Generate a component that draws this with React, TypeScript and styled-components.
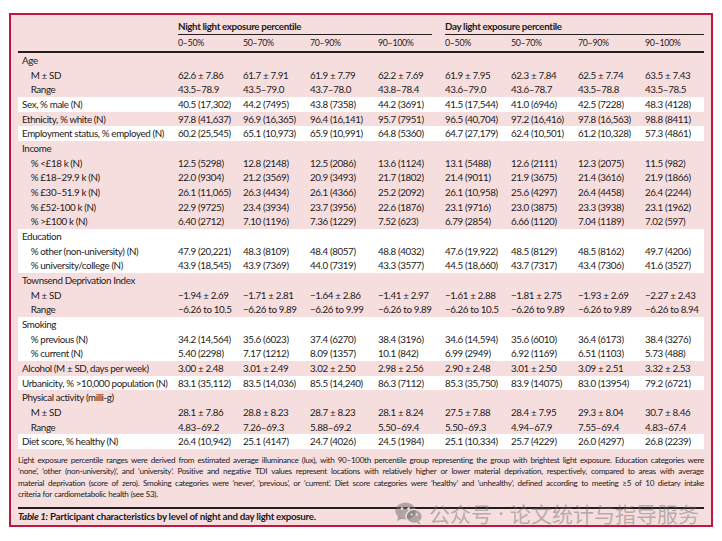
import React from 'react';
import styled, { createGlobalStyle } from 'styled-components';

const GlobalStyle = createGlobalStyle`
  html, body { margin: 0; padding: 0; background: #ffffff; }
  body { font-family: Lato, "Noto Sans", sans-serif; color: #231f20; }
`;

const COLS = '160px 65px 67px 68px 67px 66px 67px 67px 59px';

const Frame = styled.div`
  position: relative;
  box-sizing: border-box;
  margin: 13px 0 0 9px;
  width: 704px;
  height: 514px;
  border: 2px solid #c0163f;
  background: #f6dede;
  padding: 0 7px;
  font-family: Lato, "Noto Sans", sans-serif;
  color: #1e1a1b;
`;

const GroupHeadRow = styled.div`
  display: grid;
  grid-template-columns: ${COLS};
  height: 20px;
`;

const GroupHead = styled.div<{ $gap?: boolean }>`
  grid-column: span 4;
  margin-right: ${(p) => (p.$gap ? '13px' : '0')};
  border-bottom: 1px solid #231f20;
  display: flex;
  align-items: flex-end;
  padding-bottom: 1px;
  font-weight: 700;
  font-size: 9.8px;
  letter-spacing: -0.35px;
  line-height: 13px;
`;

const SubHeadRow = styled.div`
  display: grid;
  grid-template-columns: ${COLS};
  height: 16px;
  border-bottom: 2px solid #231f20;
  font-size: 8.8px;
  letter-spacing: -0.3px;
  line-height: 16px;
`;

const Band = styled.div<{ $white: boolean }>`
  background: ${(p) => (p.$white ? '#ffffff' : 'transparent')};
`;

const Row = styled.div`
  display: grid;
  grid-template-columns: ${COLS};
  height: 14.68px;
  align-items: center;
  font-size: 9.8px;
  letter-spacing: -0.38px;
  line-height: 14.68px;
  white-space: nowrap;
`;

const Label = styled.div<{ $indent?: boolean }>`
  padding-left: ${(p) => (p.$indent ? '12.7px' : '4px')};
`;

const Cell = styled.div``;

const Notes = styled.div`
  margin-top: 5.6px;
  font-size: 8.1px;
  letter-spacing: -0.3px;
  line-height: 11.5px;
`;

const NoteLine = styled.div<{ $last?: boolean }>`
  display: flex;
  justify-content: ${(p) => (p.$last ? 'flex-start' : 'space-between')};
  gap: ${(p) => (p.$last ? '2.2px' : '0')};
  white-space: nowrap;
`;

const Caption = styled.div`
  margin-top: 6px;
  border-top: 2px solid #231f20;
  font-weight: 700;
  font-size: 9.8px;
  letter-spacing: -0.3px;
  line-height: 14px;
  padding-top: 0.5px;
  em { font-style: italic; }
`;

const Watermark = styled.div`
  position: absolute;
  left: 384px;
  top: 487px;
  display: flex;
  align-items: center;
  gap: 6px;
  pointer-events: none;
`;

const WaterText = styled.span`
  display: flex;
  align-items: center;
  font-family: "Noto Sans CJK SC", sans-serif;
  font-size: 21px;
  line-height: 21px;
  color: rgba(105, 105, 105, 0.45);
  white-space: nowrap;
`;

const Dot = styled.span`
  display: inline-block;
  width: 18px;
  text-align: center;
  font-family: "Noto Sans", sans-serif;
`;

type RowData = { label: string; indent?: boolean; values?: string[] };

const groups: RowData[][] = [
  [
    { label: 'Age' },
    { label: 'M ± SD', indent: true, values: ['62.6 ± 7.86', '61.7 ± 7.91', '61.9 ± 7.79', '62.2 ± 7.69', '61.9 ± 7.95', '62.3 ± 7.84', '62.5 ± 7.74', '63.5 ± 7.43'] },
    { label: 'Range', indent: true, values: ['43.5–78.9', '43.5–79.0', '43.7–78.0', '43.8–78.4', '43.6–79.0', '43.6–78.7', '43.5–78.8', '43.5–78.5'] },
  ],
  [{ label: 'Sex, % male (N)', values: ['40.5 (17,302)', '44.2 (7495)', '43.8 (7358)', '44.2 (3691)', '41.5 (17,544)', '41.0 (6946)', '42.5 (7228)', '48.3 (4128)'] }],
  [{ label: 'Ethnicity, % white (N)', values: ['97.8 (41,637)', '96.9 (16,365)', '96.4 (16,141)', '95.7 (7951)', '96.5 (40,704)', '97.2 (16,416)', '97.8 (16,563)', '98.8 (8411)'] }],
  [{ label: 'Employment status, % employed (N)', values: ['60.2 (25,545)', '65.1 (10,973)', '65.9 (10,991)', '64.8 (5360)', '64.7 (27,179)', '62.4 (10,501)', '61.2 (10,328)', '57.3 (4861)'] }],
  [
    { label: 'Income' },
    { label: '% <£18 k (N)', indent: true, values: ['12.5 (5298)', '12.8 (2148)', '12.5 (2086)', '13.6 (1124)', '13.1 (5488)', '12.6 (2111)', '12.3 (2075)', '11.5 (982)'] },
    { label: '% £18–29.9 k (N)', indent: true, values: ['22.0 (9304)', '21.2 (3569)', '20.9 (3493)', '21.7 (1802)', '21.4 (9011)', '21.9 (3675)', '21.4 (3616)', '21.9 (1866)'] },
    { label: '% £30–51.9 k (N)', indent: true, values: ['26.1 (11,065)', '26.3 (4434)', '26.1 (4366)', '25.2 (2092)', '26.1 (10,958)', '25.6 (4297)', '26.4 (4458)', '26.4 (2244)'] },
    { label: '% £52-100 k (N)', indent: true, values: ['22.9 (9725)', '23.4 (3934)', '23.7 (3956)', '22.6 (1876)', '23.1 (9716)', '23.0 (3875)', '23.3 (3938)', '23.1 (1962)'] },
    { label: '% >£100 k (N)', indent: true, values: ['6.40 (2712)', '7.10 (1196)', '7.36 (1229)', '7.52 (623)', '6.79 (2854)', '6.66 (1120)', '7.04 (1189)', '7.02 (597)'] },
  ],
  [
    { label: 'Education' },
    { label: '% other (non-university) (N)', indent: true, values: ['47.9 (20,221)', '48.3 (8109)', '48.4 (8057)', '48.8 (4032)', '47.6 (19,922)', '48.5 (8129)', '48.5 (8162)', '49.7 (4206)'] },
    { label: '% university/college (N)', indent: true, values: ['43.9 (18,545)', '43.9 (7369)', '44.0 (7319)', '43.3 (3577)', '44.5 (18,660)', '43.7 (7317)', '43.4 (7306)', '41.6 (3527)'] },
  ],
  [
    { label: 'Townsend Deprivation Index' },
    { label: 'M ± SD', indent: true, values: ['−1.94 ± 2.69', '−1.71 ± 2.81', '−1.64 ± 2.86', '−1.41 ± 2.97', '−1.61 ± 2.88', '−1.81 ± 2.75', '−1.93 ± 2.69', '−2.27 ± 2.43'] },
    { label: 'Range', indent: true, values: ['−6.26 to 10.5', '−6.26 to 9.89', '−6.26 to 9.99', '−6.26 to 9.89', '−6.26 to 10.5', '−6.26 to 9.89', '−6.26 to 9.89', '−6.26 to 8.94'] },
  ],
  [
    { label: 'Smoking' },
    { label: '% previous (N)', indent: true, values: ['34.2 (14,564)', '35.6 (6023)', '37.4 (6270)', '38.4 (3196)', '34.6 (14,594)', '35.6 (6010)', '36.4 (6173)', '38.4 (3276)'] },
    { label: '% current (N)', indent: true, values: ['5.40 (2298)', '7.17 (1212)', '8.09 (1357)', '10.1 (842)', '6.99 (2949)', '6.92 (1169)', '6.51 (1103)', '5.73 (488)'] },
  ],
  [{ label: 'Alcohol (M ± SD, days per week)', values: ['3.00 ± 2.48', '3.01 ± 2.49', '3.02 ± 2.50', '2.98 ± 2.56', '2.90 ± 2.48', '3.01 ± 2.50', '3.09 ± 2.51', '3.32 ± 2.53'] }],
  [{ label: 'Urbanicity, % >10,000 population (N)', values: ['83.1 (35,112)', '83.5 (14,036)', '85.5 (14,240)', '86.3 (7112)', '85.3 (35,750)', '83.9 (14075)', '83.0 (13954)', '79.2 (6721)'] }],
  [
    { label: 'Physical activity (milli-g)' },
    { label: 'M ± SD', indent: true, values: ['28.1 ± 7.86', '28.8 ± 8.23', '28.7 ± 8.23', '28.1 ± 8.24', '27.5 ± 7.88', '28.4 ± 7.95', '29.3 ± 8.04', '30.7 ± 8.46'] },
    { label: 'Range', indent: true, values: ['4.83–69.2', '7.26–69.3', '5.88–69.2', '5.50–69.4', '5.50–69.3', '4.94–67.9', '7.55–69.4', '4.83–67.4'] },
  ],
  [{ label: 'Diet score, % healthy (N)', values: ['26.4 (10,942)', '25.1 (4147)', '24.7 (4026)', '24.5 (1984)', '25.1 (10,334)', '25.7 (4229)', '26.0 (4297)', '26.8 (2239)'] }],
];

const percentiles = ['0–50%', '50–70%', '70–90%', '90–100%'];

const noteLines = [
  'Light exposure percentile ranges were derived from estimated average illuminance (lux), with 90–100th percentile group representing the group with brightest light exposure. Education categories were',
  '‘none’, ‘other (non-university)’, and ‘university’. Positive and negative TDI values represent locations with relatively higher or lower material deprivation, respectively, compared to areas with average',
  'material deprivation (score of zero). Smoking categories were ‘never’, ‘previous’, or ‘current’. Diet score categories were ‘healthy’ and ‘unhealthy’, defined according to meeting ≥5 of 10 dietary intake',
  'criteria for cardiometabolic health (see S3).',
];

const WeChatIcon = () => (
  <svg width="28" height="23" viewBox="0 0 28 23" fill="none">
    <g fill="rgba(105,105,105,0.5)">
      <ellipse cx="10.5" cy="9" rx="10.2" ry="8.6" />
      <path d="M3.2 14.5 L2.2 19 L7.2 16.4 Z" />
    </g>
    <ellipse cx="19.2" cy="14.4" rx="8.2" ry="7" fill="rgba(105,105,105,0.5)" stroke="#f6dede" strokeWidth="1.4" />
    <path d="M24.2 19.4 L25.6 22.6 L21.4 20.6 Z" fill="rgba(105,105,105,0.5)" />
    <g fill="#f6dede">
      <circle cx="7" cy="6.6" r="1.3" />
      <circle cx="13.6" cy="6.6" r="1.3" />
      <circle cx="16.6" cy="12.6" r="1.1" />
      <circle cx="21.8" cy="12.6" r="1.1" />
    </g>
  </svg>
);

export default function App() {
  return (
    <>
      <GlobalStyle />
      <Frame>
        <GroupHeadRow>
          <div />
          <GroupHead $gap>Night light exposure percentile</GroupHead>
          <GroupHead>Day light exposure percentile</GroupHead>
        </GroupHeadRow>
        <SubHeadRow>
          <div />
          {[...percentiles, ...percentiles].map((p, i) => (
            <Cell key={i}>{p}</Cell>
          ))}
        </SubHeadRow>
        {groups.map((rows, gi) => (
          <Band key={gi} $white={gi % 2 === 1}>
            {rows.map((r, ri) => (
              <Row key={ri}>
                <Label $indent={r.indent}>{r.label}</Label>
                {(r.values ?? []).map((v, vi) => (
                  <Cell key={vi}>{v}</Cell>
                ))}
              </Row>
            ))}
          </Band>
        ))}
        <Notes>
          {noteLines.map((line, li) => (
            <NoteLine key={li} $last={li === noteLines.length - 1}>
              {line.split(' ').map((w, wi) => (
                <span key={wi}>{w}</span>
              ))}
            </NoteLine>
          ))}
        </Notes>
        <Caption>
          <em>Table 1:</em> Participant characteristics by level of night and day light exposure.
        </Caption>
        <Watermark>
          <WeChatIcon />
          <WaterText>
            公众号<Dot>·</Dot>论文统计与指导服务
          </WaterText>
        </Watermark>
      </Frame>
    </>
  );
}
